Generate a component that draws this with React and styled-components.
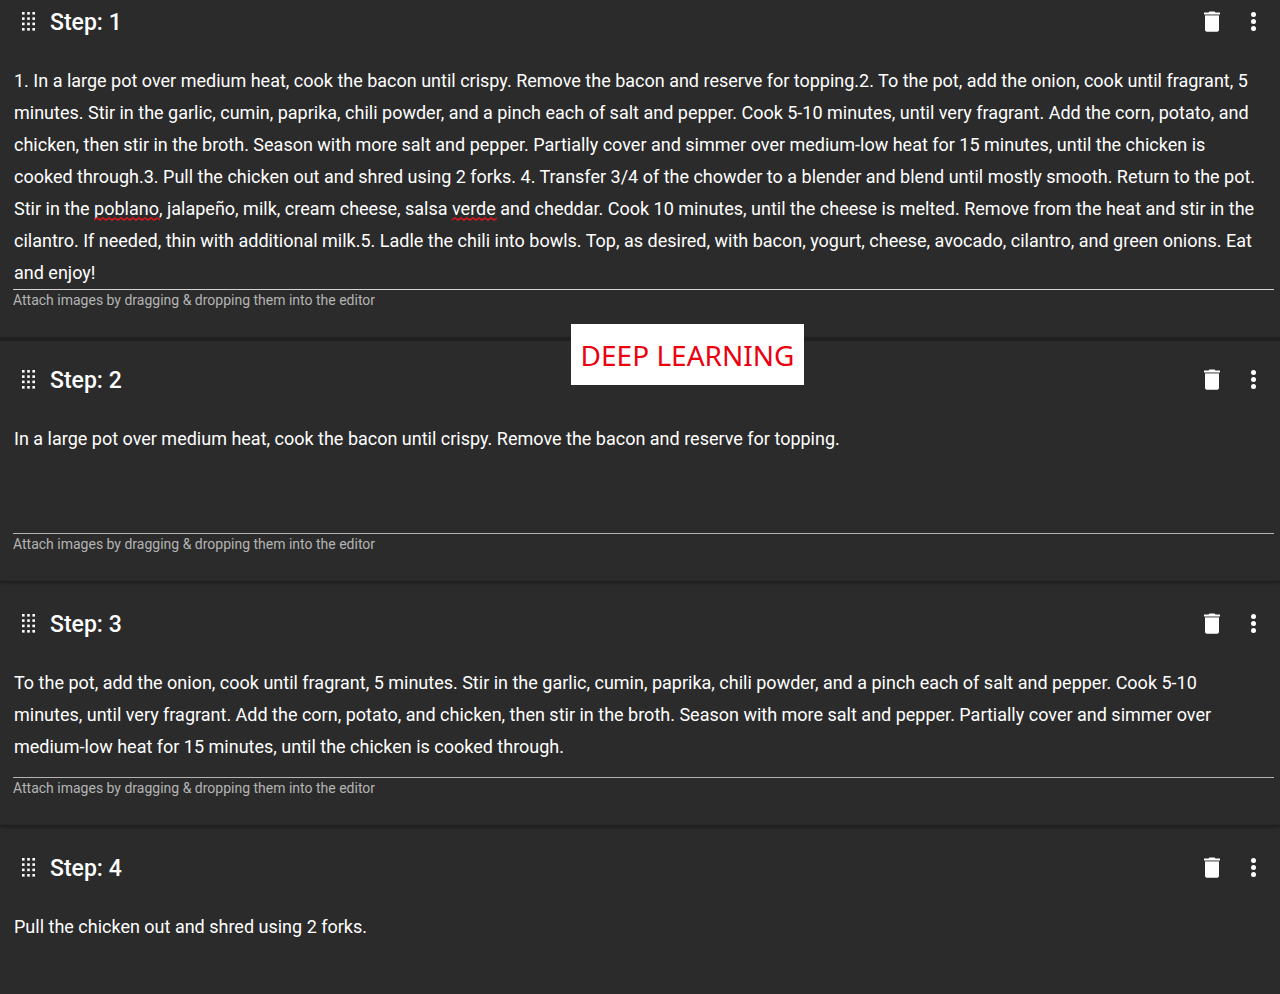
import React from "react";
import styled, { createGlobalStyle } from "styled-components";

const Global = createGlobalStyle`
  * { box-sizing: border-box; }
  html { background: #2b2b2b; scrollbar-width: none; }
  body {
    margin: 0;
    background: #2b2b2b;
    color: #fff;
    font-family: Roboto, "Liberation Sans", sans-serif;
  }
`;

const Page = styled.main`
  position: relative;
`;

const Card = styled.section`
  padding: ${(p) => (p.$first ? 0 : 21)}px 6px 27px 13px;
  box-shadow: ${(p) => (p.$first ? "0 4px 0 #202020" : "0 2px 3px #1c1c1c")};
`;

const Header = styled.header`
  display: flex;
  align-items: center;
  height: 44px;
  margin-bottom: 21px;
`;

const IconButton = styled.button`
  display: flex;
  align-items: center;
  justify-content: center;
  width: ${(p) => p.$width}px;
  height: 40px;
  padding: 0;
  border: 0;
  background: none;
  color: #fff;
  cursor: ${(p) => (p.$drag ? "grab" : "pointer")};
`;

const Title = styled.h2`
  flex: 1;
  margin: 0;
  padding: 2px 0 0 7px;
  font-size: 23px;
  line-height: 32px;
  font-weight: 500;
`;

const Field = styled.div`
  position: relative;
`;

const Editor = styled.textarea`
  display: block;
  width: 100%;
  min-height: 111px;
  field-sizing: content;
  padding: 0 16px 0 1px;
  border: 0;
  border-bottom: 1px solid ${(p) => (p.$active ? "#d4d4d4" : "#b4b4b4")};
  outline: 0;
  resize: none;
  overflow: hidden;
  background: none;
  color: #fff;
  font-family: inherit;
  font-size: 18px;
  line-height: 32px;
`;

const Squiggle = styled.svg`
  position: absolute;
  height: 4px;
  pointer-events: none;
`;

const Hint = styled.label`
  display: block;
  color: #b4b4b4;
  font-size: 14px;
  line-height: 20px;
`;

const Banner = styled.div`
  position: absolute;
  top: 324px;
  left: 571px;
  width: 233px;
  height: 61px;
  display: flex;
  align-items: center;
  justify-content: center;
  background: #fff;
  color: #ec0010;
  font-family: "Noto Sans", sans-serif;
  font-size: 28px;
  line-height: 36px;
  white-space: nowrap;
`;

const GripIcon = () => (
  <svg width="14" height="20" viewBox="0 0 14 20" fill="currentColor" aria-hidden="true">
    {[0, 5.3, 10.6, 16].map((y) =>
      [1, 6.2, 11.4].map((x) => <rect key={`${x}-${y}`} x={x} y={y} width="2.6" height="2.6" />)
    )}
  </svg>
);

const TrashIcon = () => (
  <svg width="18" height="22" viewBox="0 0 18 22" aria-hidden="true">
    <path d="M1 1.4h4.5L6.5.4h5l1 1h4.5v2H1z" fill="#fff" />
    <path d="M2 3.4h14v1H2z" fill="#999" />
    <path d="M2 4.4h14v14.4q0 2-2 2H4q-2 0-2-2z" fill="#fff" />
  </svg>
);

const MoreIcon = () => (
  <svg width="6" height="20" viewBox="0 0 6 20" fill="currentColor" aria-hidden="true">
    <circle cx="3.5" cy="2.6" r="2.5" />
    <circle cx="3.5" cy="9.5" r="2.5" />
    <circle cx="3.5" cy="16.4" r="2.5" />
  </svg>
);

const SpellingMark = ({ left, top, width }) => {
  let d = "M0 3";
  for (let x = 3; x <= width; x += 3) d += ` L${x} ${x % 2 ? 1 : 3}`;
  return (
    <Squiggle style={{ left, top, width }} aria-hidden="true">
      <path d={d} fill="none" stroke="#e0161b" strokeWidth="1.5" />
    </Squiggle>
  );
};

const steps = [
  {
    text: "1. In a large pot over medium heat, cook the bacon until crispy. Remove the bacon and reserve for topping.2. To the pot, add the onion, cook until fragrant, 5 minutes. Stir in the garlic, cumin, paprika, chili powder, and a pinch each of salt and pepper. Cook 5-10 minutes, until very fragrant. Add the corn, potato, and chicken, then stir in the broth. Season with more salt and pepper. Partially cover and simmer over medium-low heat for 15 minutes, until the chicken is cooked through.3. Pull the chicken out and shred using 2 forks. 4. Transfer 3/4 of the chowder to a blender and blend until mostly smooth. Return to the pot. Stir in the poblano, jalapeño, milk, cream cheese, salsa verde and cheddar. Cook 10 minutes, until the cheese is melted. Remove from the heat and stir in the cilantro. If needed, thin with additional milk.5. Ladle the chili into bowls. Top, as desired, with bacon, yogurt, cheese, avocado, cilantro, and green onions. Eat and enjoy!",
    misspelled: [
      { left: 81, top: 152, width: 66 },
      { left: 439, top: 152, width: 45 },
    ],
  },
  { text: "In a large pot over medium heat, cook the bacon until crispy. Remove the bacon and reserve for topping." },
  {
    text: "To the pot, add the onion, cook until fragrant, 5 minutes. Stir in the garlic, cumin, paprika, chili powder, and a pinch each of salt and pepper. Cook 5-10 minutes, until very fragrant. Add the corn, potato, and chicken, then stir in the broth. Season with more salt and pepper. Partially cover and simmer over medium-low heat for 15 minutes, until the chicken is cooked through.",
  },
  { text: "Pull the chicken out and shred using 2 forks." },
];

function Step({ number, text, misspelled = [] }) {
  const id = `step-${number}`;
  return (
    <Card $first={number === 1}>
      <Header>
        <IconButton $width={30} $drag aria-label={`Move step ${number}`}>
          <GripIcon />
        </IconButton>
        <Title>Step: {number}</Title>
        <IconButton $width={40} aria-label={`Delete step ${number}`}>
          <TrashIcon />
        </IconButton>
        <IconButton $width={42} aria-label={`More options for step ${number}`}>
          <MoreIcon />
        </IconButton>
      </Header>
      <Field>
        <Editor id={id} defaultValue={text} spellCheck={false} $active={number === 1} />
        {misspelled.map((mark) => (
          <SpellingMark key={mark.left} {...mark} />
        ))}
      </Field>
      <Hint htmlFor={id}>Attach images by dragging &amp; dropping them into the editor</Hint>
    </Card>
  );
}

export default function App() {
  return (
    <>
      <Global />
      <Page>
        {steps.map((step, i) => (
          <Step key={i} number={i + 1} {...step} />
        ))}
        <Banner>DEEP LEARNING</Banner>
      </Page>
    </>
  );
}
